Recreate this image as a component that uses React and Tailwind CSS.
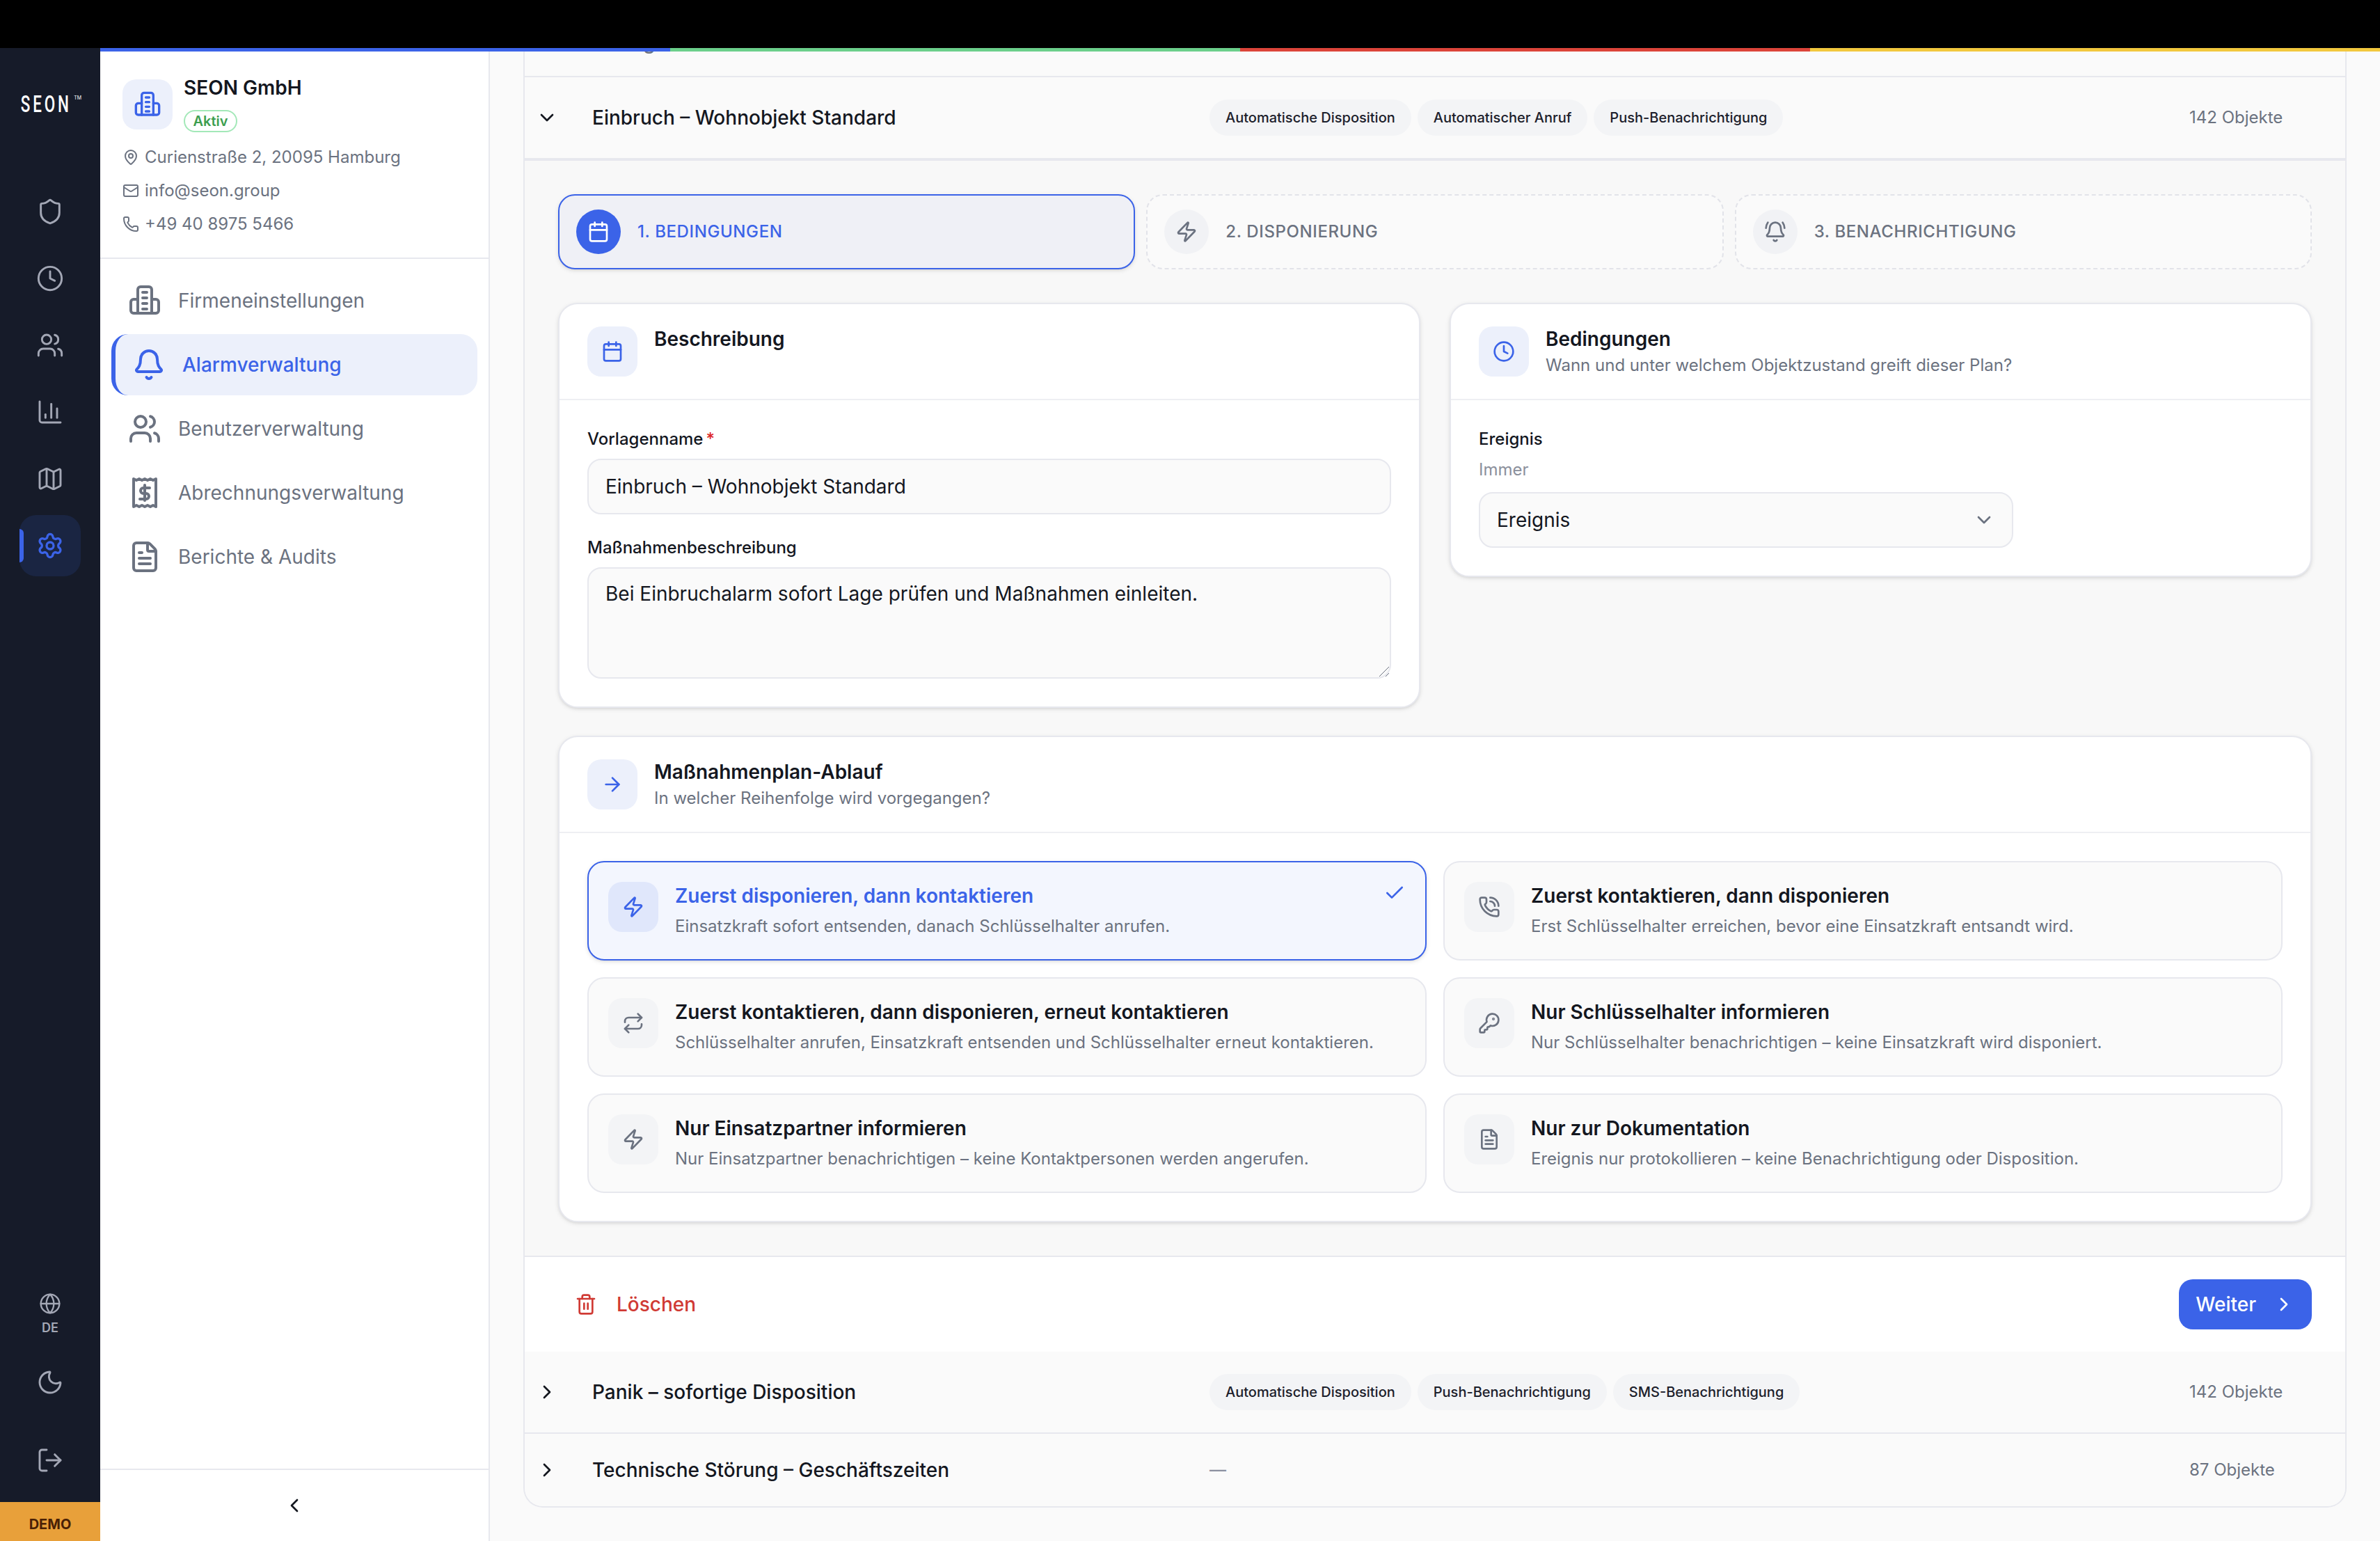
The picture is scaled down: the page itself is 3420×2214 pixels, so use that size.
import React from 'react'
import {
  Shield, Clock, Users, ChartColumn, Map, Settings, Globe, Moon, LogOut, ChevronLeft, ChevronDown, ChevronRight,
  MapPin, Mail, Phone, Bell, BellRing, FileText, Calendar, Zap, ArrowRight, Check, PhoneCall, Repeat, KeyRound, Trash2,
} from 'lucide-react'

function BuildingIcon({ className }) {
  return (
    <svg className={className} viewBox="0 0 24 24" fill="none" stroke="currentColor" strokeWidth="2" strokeLinecap="round" strokeLinejoin="round">
      <path d="M7 21V4a2 2 0 0 1 2-2h6a2 2 0 0 1 2 2v17" />
      <path d="M7 11H4a2 2 0 0 0-2 2v6a2 2 0 0 0 2 2h16a2 2 0 0 0 2-2v-6a2 2 0 0 0-2-2h-3" />
      <path d="M10.5 6h3M10.5 10h3M10.5 14h3M10.5 18h3" />
    </svg>
  )
}

function ReceiptIcon({ className }) {
  return (
    <svg className={className} viewBox="0 0 24 24" fill="none" stroke="currentColor" strokeWidth="2" strokeLinecap="round" strokeLinejoin="round">
      <path d="M4 2v20l2-1 2 1 2-1 2 1 2-1 2 1 2-1 2 1V2l-2 1-2-1-2 1-2-1-2 1-2-1-2 1z" />
      <path d="M12 6.5v11" />
      <path d="M15.5 8.5H11a2 2 0 0 0 0 4h2a2 2 0 0 1 0 4H8.5" />
    </svg>
  )
}

const railItems = [Shield, Clock, Users, ChartColumn, Map]

const navItems = [
  { label: 'Firmeneinstellungen', icon: BuildingIcon },
  { label: 'Alarmverwaltung', icon: Bell, active: true },
  { label: 'Benutzerverwaltung', icon: Users },
  { label: 'Abrechnungsverwaltung', icon: ReceiptIcon },
  { label: 'Berichte & Audits', icon: FileText },
]

const options = [
  { title: 'Zuerst disponieren, dann kontaktieren', text: 'Einsatzkraft sofort entsenden, danach Schlüsselhalter anrufen.', icon: Zap, active: true },
  { title: 'Zuerst kontaktieren, dann disponieren', text: 'Erst Schlüsselhalter erreichen, bevor eine Einsatzkraft entsandt wird.', icon: PhoneCall },
  { title: 'Zuerst kontaktieren, dann disponieren, erneut kontaktieren', text: 'Schlüsselhalter anrufen, Einsatzkraft entsenden und Schlüsselhalter erneut kontaktieren.', icon: Repeat },
  { title: 'Nur Schlüsselhalter informieren', text: 'Nur Schlüsselhalter benachrichtigen – keine Einsatzkraft wird disponiert.', icon: KeyRound },
  { title: 'Nur Einsatzpartner informieren', text: 'Nur Einsatzpartner benachrichtigen – keine Kontaktpersonen werden angerufen.', icon: Zap },
  { title: 'Nur zur Dokumentation', text: 'Ereignis nur protokollieren – keine Benachrichtigung oder Disposition.', icon: FileText },
]

function Rail() {
  return (
    <aside className="w-[72px] shrink-0 bg-[#161b29] flex flex-col items-center text-[#a3a7b5]">
      <div className="mt-[32px] -ml-[8px] h-[16px] flex items-center text-white">
        <span className="font-['Roboto',sans-serif] text-[17px] font-medium leading-4 tracking-[0.17em] inline-block scale-x-[0.66]">SEON</span>
        <span className="text-[3.5px] leading-none -ml-[7.5px] -mt-[9px]">TM</span>
      </div>
      <nav className="mt-[47.5px] flex flex-col gap-1">
        {railItems.map((Icon, i) => (
          <div key={i} className="w-11 h-11 flex items-center justify-center">
            <Icon className="w-5 h-5" strokeWidth={1.75} />
          </div>
        ))}
        <div className="relative w-11 h-11 rounded-xl bg-[#1a2542] flex items-center justify-center text-[#3b63e8]">
          <span className="absolute left-0 top-[10px] h-6 w-[3px] rounded-r bg-[#3b63e8]" />
          <Settings className="w-5 h-5" strokeWidth={2} />
        </div>
      </nav>
      <div className="mt-auto flex flex-col items-center gap-[4.5px]">
        <Globe className="w-4 h-4" strokeWidth={1.75} />
        <span className="text-[9px] leading-[10px] font-semibold">DE</span>
      </div>
      <div className="mt-3 w-11 h-11 flex items-center justify-center">
        <Moon className="w-5 h-5" strokeWidth={1.75} />
      </div>
      <div className="mt-3 w-11 h-11 flex items-center justify-center">
        <LogOut className="w-5 h-5" strokeWidth={1.75} />
      </div>
      <div className="mt-2 w-full h-7 bg-[#e8a03a] text-center pt-2.5 text-[10px] leading-3 font-bold text-[#4a2106]">DEMO</div>
    </aside>
  )
}

function CompanyPanel() {
  return (
    <aside className="w-[280px] shrink-0 bg-white border-r border-[#e7e8ee] flex flex-col">
      <div className="h-[149px] px-4 pt-5 border-b border-[#e7e8ee]">
        <div className="flex gap-2">
          <div className="w-9 h-9 rounded-[10px] bg-[#ecf0fb] text-[#3b63e8] flex items-center justify-center">
            <BuildingIcon className="w-5 h-5" />
          </div>
          <div className="-mt-[3px]">
            <p className="text-sm leading-[18px] font-semibold text-[#14171f]">SEON GmbH</p>
            <span className="mt-[7px] block w-[38.5px] h-4 rounded-full border border-[#a3e8b8] text-center text-[10px] leading-[14px] font-semibold text-[#3d9e4f]">Aktiv</span>
          </div>
        </div>
        <ul className="mt-[10px] flex flex-col gap-2 text-xs text-[#6b7280]">
          <li className="flex items-center gap-1 leading-4"><MapPin className="w-3 h-3" />Curienstraße 2, 20095 Hamburg</li>
          <li className="flex items-center gap-1 leading-4"><Mail className="w-3 h-3" />info@seon.group</li>
          <li className="flex items-center gap-1 leading-4"><Phone className="w-3 h-3" />+49 40 8975 5466</li>
        </ul>
      </div>
      <nav className="px-2 pt-2 flex flex-col gap-0.5">
        {navItems.map(({ label, icon: Icon, active }) => (
          <div
            key={label}
            className={active
              ? 'h-11 px-3 flex items-center gap-3 rounded-[12px] border-l-[3px] border-[#3b63e8] bg-[#ecf0fb] text-[#3b63e8] text-sm font-medium'
              : 'h-11 px-3 flex items-center gap-3 text-[#6b7280] text-sm'}
          >
            <Icon className="w-6 h-6" />
            {label}
          </div>
        ))}
      </nav>
      <div className="mt-auto h-[52px] border-t border-[#e7e8ee] flex items-center justify-center text-[#14171f]">
        <ChevronLeft className="w-4 h-4" />
      </div>
    </aside>
  )
}

function Chip({ children }) {
  return <span className="px-[11.5px] py-1.5 rounded-full bg-[#f3f4f6] text-[10px] leading-[14px] font-medium text-[#1c202b] whitespace-nowrap">{children}</span>
}

function Row({ title, chips, count, open, className }) {
  const Chevron = open ? ChevronDown : ChevronRight
  return (
    <div className={`flex items-center pl-2 py-4 bg-[#fafafa] border-[#e7e8ee] ${className}`}>
      <Chevron className="w-4 h-4 text-[#14171f] shrink-0" />
      <p className="ml-[24.5px] w-[443.5px] text-sm leading-5 font-medium text-[#14171f]">{title}</p>
      <div className="flex-1 flex gap-[4.5px]">
        {chips.length ? chips.map(c => <Chip key={c}>{c}</Chip>) : <span className="text-xs leading-5 font-medium text-[#8b90a0]">—</span>}
      </div>
      <p className="w-[112px] text-xs leading-5 text-[#6b7280]">{count}</p>
    </div>
  )
}

function Step({ label, icon: Icon, active }) {
  return (
    <div className={active
      ? 'h-[54px] px-[12px] flex items-center gap-3 rounded-xl border border-[#3b63e8] bg-[#eff0f6] shadow-sm'
      : 'h-[54px] px-[12px] flex items-center gap-3 rounded-xl border border-dashed border-[#e2e3e9] bg-[#fafafa]'}>
      <span className={active
        ? 'w-8 h-8 rounded-full bg-[#3b63e8] text-white flex items-center justify-center'
        : 'w-8 h-8 rounded-full bg-[#f1f2f5] text-[#6b7280] flex items-center justify-center'}>
        <Icon className="w-4 h-4" />
      </span>
      <span className={active ? 'text-xs font-medium tracking-wide text-[#3b63e8]' : 'text-xs font-medium tracking-wide text-[#6b7280]'}>{label}</span>
    </div>
  )
}

function CardHeader({ icon: Icon, title, subtitle }) {
  return (
    <div className="flex gap-3 px-5 py-4 border-b border-[#eeeff3]">
      <div className="w-9 h-9 shrink-0 rounded-[10px] bg-[#ecf0fb] text-[#3b63e8] flex items-center justify-center">
        <Icon className="w-4 h-4" />
      </div>
      <div>
        <p className="text-sm leading-[18px] font-semibold text-[#14171f]">{title}</p>
        {subtitle && <p className="mt-0.5 text-xs leading-4 text-[#6b7280]">{subtitle}</p>}
      </div>
    </div>
  )
}

function Option({ title, text, icon: Icon, active }) {
  return (
    <div className={active
      ? 'h-[71.5px] p-3.5 flex gap-3 rounded-xl border border-[#3b63e8] bg-[#f3f6fe] shadow-sm'
      : 'h-[71.5px] p-3.5 flex gap-3 rounded-xl border border-[#e7e8ee] bg-[#fafafa]'}>
      <span className={active
        ? 'w-9 h-9 shrink-0 rounded-[10px] bg-[#e0e7fb] text-[#3b63e8] flex items-center justify-center'
        : 'w-9 h-9 shrink-0 rounded-[10px] bg-[#f3f4f6] text-[#6b7280] flex items-center justify-center'}>
        <Icon className="w-4 h-4" />
      </span>
      <div>
        <p className={active ? 'text-sm leading-5 font-semibold text-[#3b63e8]' : 'text-sm leading-5 font-semibold text-[#14171f]'}>{title}</p>
        <p className="mt-1 text-xs leading-4 text-[#6b7280]">{text}</p>
      </div>
      {active && <Check className="ml-auto w-4 h-4 shrink-0 text-[#3b63e8]" />}
    </div>
  )
}

const fieldClass = 'w-full rounded-[10px] border border-[#e7e8ee] bg-[#fafafa] px-3 text-sm text-[#14171f] outline-none'

function PlanCard() {
  return (
    <div className="mx-6 rounded-[14px]">
      <div className="grid grid-cols-2 gap-[21px] items-start">
        <section className="rounded-[14px] border border-[#e7e8ee] bg-white shadow-sm">
          <CardHeader icon={Calendar} title="Beschreibung" />
          <div className="px-5 pt-5 pb-5">
            <p className="mb-1.5 text-xs leading-4 font-medium text-[#14171f]">Vorlagenname<span className="ml-0.5 text-[#dc2626]">*</span></p>
            <input className={`${fieldClass} h-10`} readOnly defaultValue="Einbruch – Wohnobjekt Standard" />
            <p className="mt-4 mb-1.5 text-xs leading-4 font-medium text-[#14171f]">Maßnahmenbeschreibung</p>
            <div className="relative">
              <textarea className={`${fieldClass} block h-20 py-2 resize-none`} readOnly defaultValue="Bei Einbruchalarm sofort Lage prüfen und Maßnahmen einleiten." />
              <svg className="absolute right-[1px] bottom-[1px] w-2 h-2 text-[#6b7280]" viewBox="0 0 8 8" fill="none" stroke="currentColor" strokeWidth="0.5">
                <path d="M7.5 0.5 0.5 7.5M7.5 5 5 7.5" />
              </svg>
            </div>
          </div>
        </section>
        <section className="rounded-[14px] border border-[#e7e8ee] bg-white shadow-sm">
          <CardHeader icon={Clock} title="Bedingungen" subtitle="Wann und unter welchem Objektzustand greift dieser Plan?" />
          <div className="px-5 py-5">
            <p className="text-xs leading-4 font-medium text-[#14171f]">Ereignis</p>
            <p className="mt-1.5 text-xs leading-4 text-[#8b909c]">Immer</p>
            <div className={`${fieldClass} mt-2 !w-96 h-10 flex items-center justify-between`}>
              Ereignis
              <ChevronDown className="w-4 h-4 text-[#6b7280]" />
            </div>
          </div>
        </section>
      </div>
      <section className="mt-5 rounded-[14px] border border-[#e7e8ee] bg-white shadow-sm">
        <CardHeader icon={ArrowRight} title="Maßnahmenplan-Ablauf" subtitle="In welcher Reihenfolge wird vorgegangen?" />
        <div className="p-5 grid grid-cols-2 gap-3">
          {options.map(o => <Option key={o.title} {...o} />)}
        </div>
      </section>
    </div>
  )
}

export default function App() {
  return (
    <div className="[zoom:2] w-[1710px] h-[1107px] overflow-hidden flex flex-col font-['Inter',sans-serif]">
      <div className="h-[34.5px] shrink-0 bg-black" />
      <div className="flex-1 min-h-0 flex">
        <Rail />
        <div className="flex-1 min-w-0 flex flex-col">
          <div className="h-[2.5px] shrink-0 flex">
            <div className="flex-1 bg-[#3b63e8]" />
            <div className="flex-1 bg-[#6bcf8b]" />
            <div className="flex-1 bg-[#dc4439]" />
            <div className="flex-1 bg-[#f2c83e]" />
          </div>
          <div className="flex-1 min-h-0 flex">
            <CompanyPanel />
            <main className="flex-1 min-w-0 px-6 bg-[#fafafa] overflow-hidden">
              <div className="border-x border-b border-[#e7e8ee] rounded-b-[14px] overflow-hidden">
                {/* vorherige Zeile, fast ganz weggescrollt */}
                <div className="h-[17.5px] overflow-hidden bg-[#fafafa]">
                  <p className="pl-[48.5px] -mt-[16.5px] text-sm leading-5 font-medium text-[#6b7280]">Einzug</p>
                </div>
                <Row
                  open
                  title="Einbruch – Wohnobjekt Standard"
                  chips={['Automatische Disposition', 'Automatischer Anruf', 'Push-Benachrichtigung']}
                  count="142 Objekte"
                  className="border-t border-b-2"
                />
                <div className="bg-[#f8f8f8] pt-6 pb-6">
                  <div className="mx-6 mb-6 grid grid-cols-3 gap-2">
                    <Step active icon={Calendar} label="1. BEDINGUNGEN" />
                    <Step icon={Zap} label="2. DISPONIERUNG" />
                    <Step icon={BellRing} label="3. BENACHRICHTIGUNG" />
                  </div>
                  <PlanCard />
                </div>
                <div className="h-[69px] px-6 bg-white border-t border-[#e7e8ee] flex items-center justify-between">
                  <button className="pl-3 flex items-center gap-3.5 text-sm font-medium text-[#d03a34]">
                    <Trash2 className="w-4 h-4" />
                    Löschen
                  </button>
                  <button className="h-9 px-3 rounded-[10px] bg-[#3b63e8] text-white text-sm font-medium flex items-center gap-3">
                    Weiter
                    <ChevronRight className="w-4 h-4" />
                  </button>
                </div>
                <Row
                  title="Panik – sofortige Disposition"
                  chips={['Automatische Disposition', 'Push-Benachrichtigung', 'SMS-Benachrichtigung']}
                  count="142 Objekte"
                  className="border-b"
                />
                <Row title="Technische Störung – Geschäftszeiten" chips={[]} count="87 Objekte" />
              </div>
            </main>
          </div>
        </div>
      </div>
    </div>
  )
}
